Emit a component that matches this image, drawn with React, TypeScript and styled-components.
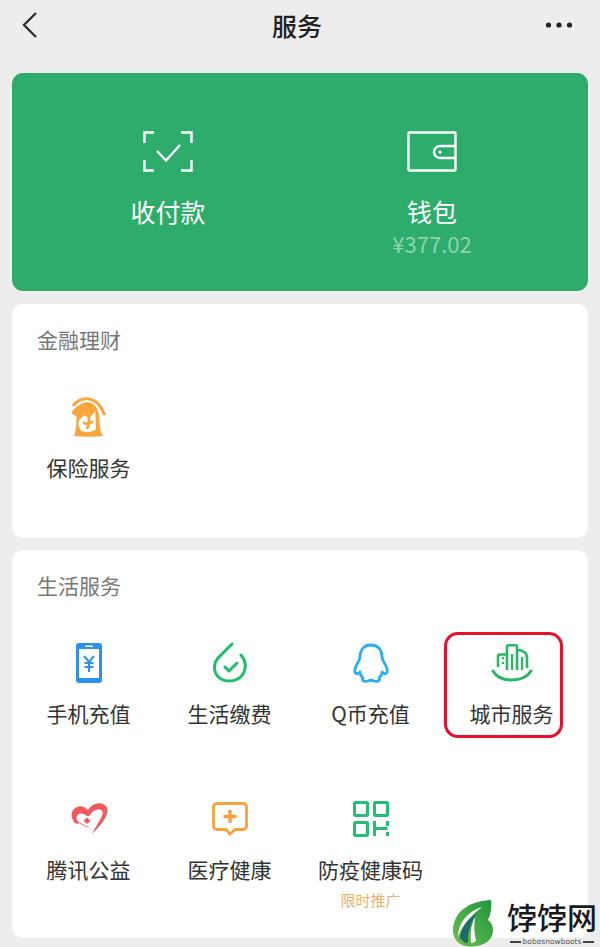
import styled, { createGlobalStyle } from "styled-components";

const GlobalStyle = createGlobalStyle`
  html, body {
    margin: 0;
    padding: 0;
    background: #ededed;
  }
  body {
    font-family: "Noto Sans CJK SC", "Liberation Sans", sans-serif;
  }
`;

function BackIcon() {
  return (
    <svg width="18" height="28" viewBox="0 0 18 28" fill="none">
      <path d="M15 2 L3 14 L15 26" stroke="#333" strokeWidth="2.4" />
    </svg>
  );
}

function MoreIcon() {
  return (
    <svg width="28" height="8" viewBox="0 0 28 8" fill="#222">
      <circle cx="3.5" cy="4" r="2.6" />
      <circle cx="14" cy="4" r="2.6" />
      <circle cx="24.5" cy="4" r="2.6" />
    </svg>
  );
}

function ScanIcon() {
  return (
    <svg width="50" height="41" viewBox="0 0 50 41" fill="none" stroke="#fff" strokeWidth="2.4">
      <path d="M11 1.5 H1.5 V12 M38 1.5 H48.5 V12 M1.5 29 V39.5 H11 M48.5 29 V39.5 H38" />
      <path d="M14 20 L23 29.5 L37 14" />
    </svg>
  );
}

function WalletIcon() {
  return (
    <svg width="50" height="41" viewBox="0 0 50 41" fill="none" stroke="#fff" strokeWidth="2.4">
      <rect x="1.5" y="1.5" width="47" height="38" rx="1" />
      <path d="M48.5 15 H33 a5.5 5.5 0 0 0 0 12 H48.5" />
      <circle cx="33" cy="21" r="1.6" fill="#fff" stroke="none" />
    </svg>
  );
}

function InsuranceIcon() {
  return (
    <svg width="36" height="42" viewBox="0 0 36 42" fill="none">
      <path d="M2 10 C9 0 26 -2 33.5 19" stroke="#f9a63f" strokeWidth="3" />
      <path
        d="M0.5 17 C3 12 7 9 12 7 C20 4 27 10 28 19 C29 27 28 33 32 40 C24 41 10 41 3 40 C5 35 5.500 28 5.500 21 Z"
        fill="#f9a63f"
      />
      <path
        d="M8 24 C10 22 12 21 13.500 19 C15 21 18 22 20 20 C22 18 23 17 24 15 C25 21 24.500 28 25 33 C21 37 12 37 9.500 34 C7.500 31 7 27 8 24 Z"
        fill="#fff"
      />
      <path
        d="M16 8 C21 9 22 14 19 17 C18 18 17 19 15 19 M18 20 C18 24 18 28 16.500 32 M13 27 C15 28 18 28 21 26"
        stroke="#f9a63f"
        strokeWidth="2.8"
        strokeLinecap="round"
      />
    </svg>
  );
}

function PhoneIcon() {
  return (
    <svg width="26" height="40" viewBox="0 0 26 40">
      <rect width="26" height="40" rx="3" fill="#2f8fec" />
      <rect x="3" y="6" width="20" height="29" fill="#fff" />
      <rect x="9" y="2.5" width="8" height="1.6" rx="0.8" fill="#fff" />
      <path
        d="M8 13 L13 19 L18 13 M8.5 20 H17.5 M8.5 24 H17.5 M13 19 V29"
        fill="none"
        stroke="#2f8fec"
        strokeWidth="2"
      />
    </svg>
  );
}

function BillIcon() {
  return (
    <svg width="34" height="42" viewBox="0 0 34 42" fill="none" stroke="#1fbf69" strokeWidth="3" strokeLinecap="round">
      <path d="M19 2 L5 16 C-1 23 1 33 8 37 C15 41 26 39 30 32 C34 25 32 18 28 13" />
      <path d="M12 25 L16 29 L24 21" />
    </svg>
  );
}

function QqIcon() {
  return (
    <svg width="36" height="41" viewBox="0 0 36 41" fill="none" stroke="#27aef5" strokeWidth="2.8" strokeLinejoin="round">
      <path d="M18 2 C26 2 29 8 29 14 C29 18 33 21 34 26 C35 31 32 32 29 29 C29 33 27 34 26 35 C28 38 24 39 21 38 C19 37 17 37 15 38 C12 39 8 38 10 35 C9 34 7 33 7 29 C4 32 1 31 2 26 C3 21 7 18 7 14 C7 8 10 2 18 2 Z" />
    </svg>
  );
}

function CityIcon() {
  return (
    <svg width="42" height="38" viewBox="0 0 42 38" fill="none" stroke="#27b765" strokeWidth="2.6">
      <path d="M7 23 V12 C7 11 8 10.500 9 10.500 H16 M16 26 V2.500 C16 1.800 16.500 1.300 17.200 1.300 H24.800 C25.500 1.300 26 1.800 26 2.500 V26" />
      <path d="M26 6 C32 6 36 9 36 14 V24" />
      <path d="M21 10 V26 M31 13 V26" strokeWidth="2.2" />
      <path d="M12 13 v2 M12 18 v2" strokeWidth="2.4" />
      <path d="M2 27 C9 39 32 39 40 27" strokeLinecap="round" strokeWidth="3" />
    </svg>
  );
}

function HeartIcon() {
  return (
    <svg width="38" height="34" viewBox="0 0 38 34">
      <path
        d="M22 32 C30 24 38 15 37.500 8 C37 2 30 0 25 2 C22 3 20 5 18 8 C15 5 11 3 7 5 C2 7 0 13 3 18 C4 21 7 23 10 21 C6.500 19 5.500 16 7.500 13 C9.500 10.500 14 11 17 14 L19 14 C22 9 26 7 29.500 7.500 C33 8 33.500 11 31.500 15 C29 20 25 26 22 32 Z"
        fill="#ee5a5f"
      />
      <path d="M10 21 C13 23 16 25 19 25" fill="none" stroke="#f08a8c" strokeWidth="1.2" />
      <path d="M13.500 18.500 L17 15.500 L20.500 19 L17 22 Z" fill="#ee5a5f" />
    </svg>
  );
}

function MedicalIcon() {
  return (
    <svg width="36" height="34" viewBox="0 0 36 34" fill="none">
      <path
        d="M5 1.500 H31 a3.500 3.500 0 0 1 3.500 3.500 V24 a3.500 3.500 0 0 1 -3.500 3.500 H23 L18 32 L14 27.500 H5 a3.500 3.500 0 0 1 -3.500 -3.500 V5 a3.500 3.500 0 0 1 3.500 -3.500 Z"
        stroke="#f6a33f"
        strokeWidth="2.8"
      />
      <path d="M18 8 V21 M11.500 14.500 H24.500" stroke="#f6a33f" strokeWidth="3.4" />
    </svg>
  );
}

function CodeIcon() {
  return (
    <svg width="36" height="36" viewBox="0 0 36 36" fill="none" stroke="#22bf73" strokeWidth="3">
      <rect x="1.500" y="1.500" width="13" height="13" rx="1" />
      <rect x="21.500" y="1.500" width="13" height="13" rx="1" />
      <rect x="1.500" y="21.500" width="13" height="13" rx="1" />
      <path d="M21.500 20 V35 M21.500 27.500 H34.500 M34.500 20 V25 M34.500 31 V35" />
    </svg>
  );
}

function LeafLogo() {
  return (
    <svg width="46" height="47" viewBox="0 0 46 47">
      <defs>
        <linearGradient id="leafGreen" x1="0" y1="1" x2="1" y2="0">
          <stop offset="0" stopColor="#6cc04a" />
          <stop offset="1" stopColor="#1f9440" />
        </linearGradient>
      </defs>
      <path
        d="M40 0 C22 1 5 8 2 28 C1 38 7 46 18 46.500 C30 47 42 42 42 30 C42 26 40 22 37 20 C40 14 41 6 40 0 Z"
        fill="url(#leafGreen)"
      />
      <path d="M31 7 C18 11 7 22 7 37 C10 28 17 18 31 7 Z" fill="#fff" />
      <path d="M27 12 C17 19 10 27 9 38 C11 41 14 43 17 43 C16 32 20 21 27 12 Z" fill="#1d6b6b" />
      <path d="M24 17 C20 25 19 34 20 43 C22 43 24 42 25 41 C23 33 23 25 24 17 Z" fill="#fff" />
    </svg>
  );
}

export default function App() {
  return (
    <Page>
      <GlobalStyle />
      <Header>
        <BackButton>
          <BackIcon />
        </BackButton>
        <HeaderTitle>服务</HeaderTitle>
        <MoreButton>
          <MoreIcon />
        </MoreButton>
      </Header>

      <PayCard>
        <PayItem>
          <ScanIcon />
          <PayLabel>收付款</PayLabel>
        </PayItem>
        <PayItem>
          <WalletIcon />
          <PayLabel>钱包</PayLabel>
          <Balance>¥377.02</Balance>
        </PayItem>
      </PayCard>

      <SectionCard $height={234}>
        <SectionTitle>金融理财</SectionTitle>
        <ServiceGrid>
          <Service>
            <IconSlot><InsuranceIcon /></IconSlot>
            <ServiceLabel>保险服务</ServiceLabel>
          </Service>
        </ServiceGrid>
      </SectionCard>

      <SectionCard $height={388}>
        <SectionTitle>生活服务</SectionTitle>
        <ServiceGrid>
          <Service>
            <IconSlot><PhoneIcon /></IconSlot>
            <ServiceLabel>手机充值</ServiceLabel>
          </Service>
          <Service>
            <IconSlot><BillIcon /></IconSlot>
            <ServiceLabel>生活缴费</ServiceLabel>
          </Service>
          <Service>
            <IconSlot><QqIcon /></IconSlot>
            <ServiceLabel>Q币充值</ServiceLabel>
          </Service>
          <Service>
            <Highlight />
            <IconSlot><CityIcon /></IconSlot>
            <ServiceLabel>城市服务</ServiceLabel>
          </Service>
          <Service>
            <IconSlot><HeartIcon /></IconSlot>
            <ServiceLabel>腾讯公益</ServiceLabel>
          </Service>
          <Service>
            <IconSlot><MedicalIcon /></IconSlot>
            <ServiceLabel>医疗健康</ServiceLabel>
          </Service>
          <Service>
            <IconSlot><CodeIcon /></IconSlot>
            <ServiceLabel>防疫健康码</ServiceLabel>
            <Promo>限时推广</Promo>
          </Service>
        </ServiceGrid>
      </SectionCard>

      <Watermark>
        <LeafLogo />
        <WatermarkText>
          <WatermarkName>饽饽网</WatermarkName>
          <WatermarkSub>bobosnowboots</WatermarkSub>
        </WatermarkText>
      </Watermark>
    </Page>
  );
}

const Page = styled.div`
  position: relative;
  width: 600px;
  height: 947px;
  overflow: hidden;
  background: #ededed;
`;

const Header = styled.div`
  height: 50px;
  margin-bottom: 23px;
  padding: 0 27px 0 21px;
  display: flex;
  align-items: center;
  justify-content: space-between;
`;

const BackButton = styled.div`
  width: 28px;
  display: flex;
`;

const MoreButton = styled.div`
  width: 28px;
  display: flex;
`;

const HeaderTitle = styled.div`
  color: #222;
  font-size: 25px;
  font-weight: 500;
`;

const PayCard = styled.div`
  height: 218px;
  margin: 0 12px 13px;
  padding: 58px 24px 0;
  box-sizing: border-box;
  display: grid;
  grid-template-columns: 1fr 1fr;
  background: #2dac6b;
  border-radius: 11px;
`;

const PayItem = styled.div`
  display: flex;
  flex-direction: column;
  align-items: center;
`;

const PayLabel = styled.div`
  margin-top: 21px;
  color: #fff;
  font-size: 25px;
  line-height: 36px;
`;

const Balance = styled.div`
  color: #8ed4ad;
  font-size: 22px;
  line-height: 28px;
`;

const SectionCard = styled.div<{ $height: number }>`
  height: ${(props) => props.$height}px;
  margin: 0 12px 12px;
  padding: 20px 6px 0;
  box-sizing: border-box;
  background: #fff;
  border-radius: 11px;
`;

const SectionTitle = styled.div`
  margin-left: 19px;
  color: #777;
  font-size: 21px;
  line-height: 30px;
`;

const ServiceGrid = styled.div`
  margin-top: 42px;
  display: grid;
  grid-template-columns: repeat(4, 141px);
  grid-auto-rows: 88px;
  row-gap: 68px;
`;

const Service = styled.div`
  position: relative;
  display: flex;
  flex-direction: column;
  align-items: center;
`;

const IconSlot = styled.div`
  flex: none;
  height: 42px;
  margin-bottom: 14px;
  display: flex;
  align-items: center;
  justify-content: center;
`;

const ServiceLabel = styled.div`
  flex: none;
  color: #333;
  font-size: 21px;
  line-height: 30px;
  white-space: nowrap;
`;

const Promo = styled.div`
  flex: none;
  margin-top: 6px;
  color: #eeb06a;
  font-size: 15px;
  line-height: 20px;
`;

const Highlight = styled.div`
  position: absolute;
  top: -10px;
  left: 3px;
  width: 119px;
  height: 106px;
  box-sizing: border-box;
  border: 3px solid #e8102a;
  border-radius: 14px;
`;

const Watermark = styled.div`
  position: absolute;
  right: 3px;
  bottom: 0;
  display: flex;
  align-items: flex-end;
  gap: 10px;
`;

const WatermarkText = styled.div`
  display: flex;
  flex-direction: column;
  align-items: center;
`;

const WatermarkName = styled.div`
  margin-bottom: 5px;
  color: #1a1a1a;
  font-size: 30px;
  font-weight: 500;
  line-height: 32px;
`;

const WatermarkSub = styled.div`
  color: #555;
  font-family: "DejaVu Sans", sans-serif;
  font-size: 7.5px;
  line-height: 10px;
  display: flex;
  align-items: center;
  gap: 2px;
  &::before,
  &::after {
    content: "";
    width: 11px;
    height: 1.5px;
    background: #444;
  }
`;
